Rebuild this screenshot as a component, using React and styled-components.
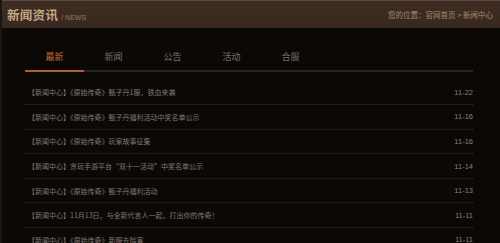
import React, { useState } from "react"
import styled, { createGlobalStyle } from "styled-components"

const GlobalStyle = createGlobalStyle`
    html, body {
        margin: 0;
        padding: 0;
        background: #0c0805;
        font-family: "Noto Sans CJK SC", "Noto Sans", sans-serif;
    }
`

const Page = styled.div`
    width: 500px;
    height: 243px;
    overflow: hidden;
    background: #0c0805;
    border-left: 2px solid #1b1410;
    box-sizing: border-box;
`

const Header = styled.div`
    height: 28px;
    box-sizing: border-box;
    border-top: 1px solid #5c4a3f;
    background: linear-gradient(180deg, #3f2d24 0%, #39281f 100%);
    display: flex;
    align-items: center;
    justify-content: space-between;
    padding: 0 7px 0 5px;
`

const Title = styled.div`
    display: flex;
    align-items: baseline;
    gap: 3px;
`

const TitleMain = styled.span`
    font-size: 12.5px;
    font-weight: 700;
    color: #c2a884;
    letter-spacing: 0.3px;
    font-family: "Noto Sans CJK SC", serif;
`

const TitleSub = styled.span`
    font-size: 7px;
    color: #957d66;
    font-family: "Liberation Sans", sans-serif;
`

const Crumb = styled.div`
    font-size: 7.5px;
    color: #a48c70;
`

const Body = styled.div`
    width: 448px;
    margin-left: 23px;
`

const Tabs = styled.div`
    display: flex;
    padding-top: 18px;
    border-bottom: 2px solid #2a2421;
`

const Tab = styled.div`
    width: 59px;
    height: 22px;
    line-height: 22px;
    padding-bottom: 2px;
    margin-bottom: -2px;
    text-align: center;
    font-size: 9px;
    color: ${p => (p.$active ? "#c0703e" : "#77716b")};
    border-bottom: 2px solid ${p => (p.$active ? "#a8603a" : "transparent")};
    cursor: pointer;
`

const List = styled.div`
    margin-top: 8.5px;
`

const Row = styled.div`
    height: 23.6px;
    display: flex;
    align-items: center;
    justify-content: space-between;
    padding-left: 3px;
    border-bottom: 1px dotted #352f2b;
`

const RowText = styled.span`
    font-size: 7px;
    color: #807a74;
`

const RowDate = styled.span`
    font-size: 7.5px;
    color: #86817b;
    font-family: "Liberation Sans", sans-serif;
`

const tabs = ["最新", "新闻", "公告", "活动", "合服"]

const news = [
    ["【新闻中心】《原始传奇》甄子丹1服，铁血来袭", "11-22"],
    ["【新闻中心】《原始传奇》甄子丹福利活动中奖名单公示", "11-16"],
    ["【新闻中心】《原始传奇》玩家故事征集", "11-16"],
    ["【新闻中心】贪玩手游平台“双十一活动”中奖名单公示", "11-14"],
    ["【新闻中心】《原始传奇》甄子丹福利活动", "11-13"],
    ["【新闻中心】11月13日，与全新代言人一起，打出你的传奇！", "11-11"],
    ["【新闻中心】《原始传奇》新服去除害", "11-11"],
]

function App() {
    const [active, setActive] = useState(0)

    return (
        <>
            <GlobalStyle />
            <Page>
                <Header>
                    <Title>
                        <TitleMain>新闻资讯</TitleMain>
                        <TitleSub>/ NEWS</TitleSub>
                    </Title>
                    <Crumb>您的位置：官网首页 &gt; 新闻中心</Crumb>
                </Header>
                <Body>
                    <Tabs>
                        {tabs.map((t, i) => (
                            <Tab key={t} $active={i === active} onClick={() => setActive(i)}>{t}</Tab>
                        ))}
                    </Tabs>
                    <List>
                        {news.map(([text, date], i) => (
                            <Row key={i}>
                                <RowText>{text}</RowText>
                                <RowDate>{date}</RowDate>
                            </Row>
                        ))}
                    </List>
                </Body>
            </Page>
        </>
    )
}

export default App
